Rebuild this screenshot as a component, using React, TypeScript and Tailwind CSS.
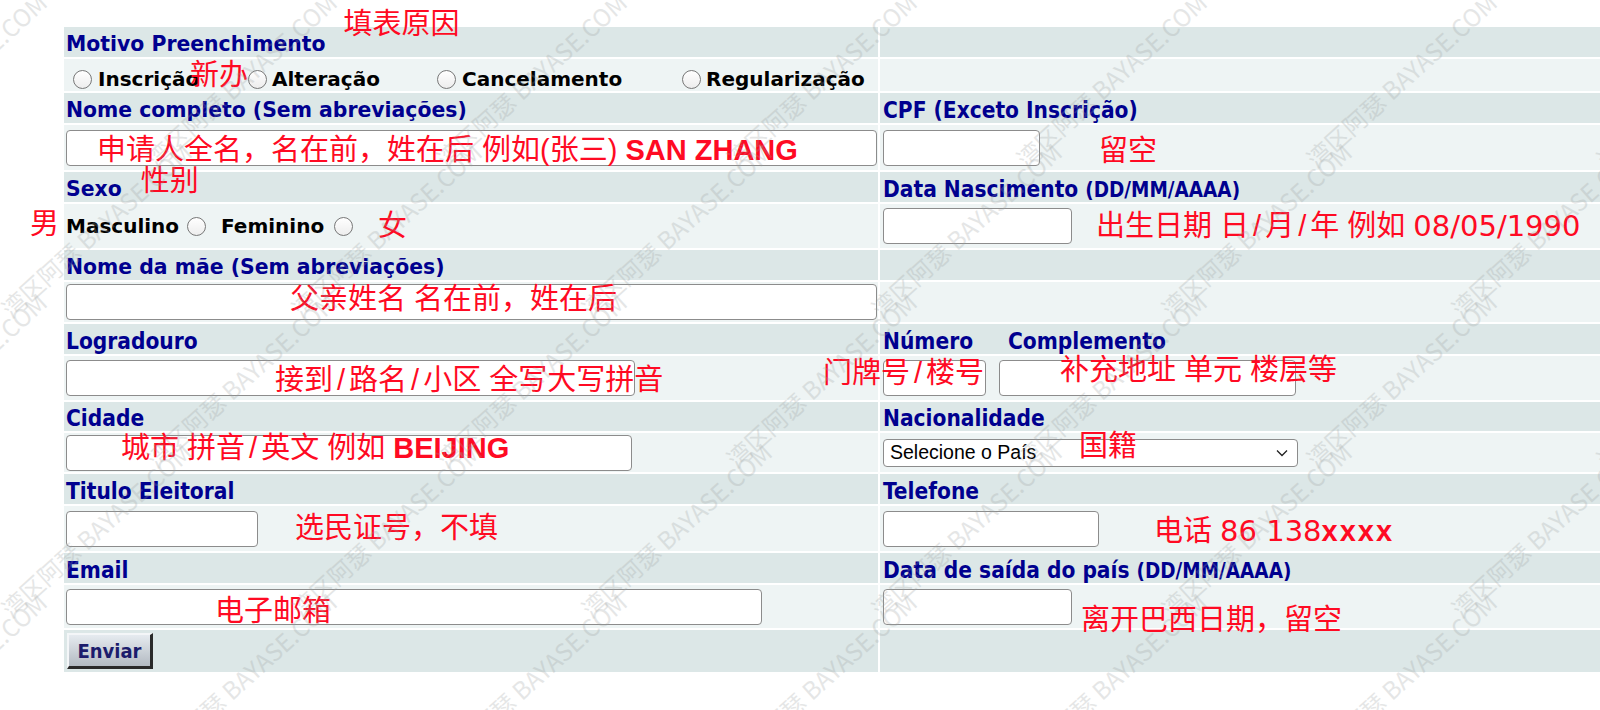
import React from 'react';

const wide = "pt-[4px] font-['DejaVu_Sans',sans-serif] font-bold text-[20.4px] leading-none text-[#00008f] whitespace-nowrap";
const narrow = "pt-[4px] font-['DejaVu_Sans_Condensed','DejaVu_Sans',sans-serif] font-bold text-[22.5px] leading-none text-[#00008f] whitespace-nowrap";
const black = "font-['DejaVu_Sans',sans-serif] font-bold text-[20px] leading-none text-black whitespace-nowrap";
const red = "shrink-0 whitespace-nowrap font-['Liberation_Sans','Noto_Sans_CJK_SC',sans-serif] text-[29px] leading-none text-[#ff0a23]";
const note = `absolute ${red}`;

// the slash and the digits of the notes are wider than Arial's
function Slash() {
  return <span className="mx-[4px]">/</span>;
}

function Num({ children }: { children: React.ReactNode }) {
  return <span className="font-['DejaVu_Sans',sans-serif]">{children}</span>;
}

function Field({ className }: { className: string }) {
  return (
    <input
      type="text"
      readOnly
      className={`h-[36px] shrink-0 rounded-[4px] border border-[#8c8c8c] bg-white outline-none ${className}`}
    />
  );
}

function Radio() {
  return <span className="inline-block h-[19px] w-[19px] shrink-0 rounded-full border border-[#777777] bg-linear-to-b from-white to-[#ededed]" />;
}

interface RowProps {
  h: string;
  dark?: boolean;
  left?: React.ReactNode;
  right?: React.ReactNode;
}

function Row({ h, dark, left, right }: RowProps) {
  const bg = dark ? 'bg-[#dce7e7]' : 'bg-[#eef4f4]';
  return (
    <div className={`grid grid-cols-[814px_1fr] grid-rows-1 gap-[2px] ${h}`}>
      <div className={`flex min-h-0 items-center pl-[2px] ${bg}`}>{left}</div>
      <div className={`flex min-h-0 items-center pl-[3px] ${bg}`}>{right}</div>
    </div>
  );
}

// faint diagonal watermark tiled over the page
function Watermark() {
  const marks: { x: number; y: number }[] = [];
  for (let r = 0; r < 6; r++) {
    for (let c = 0; c < 7; c++) {
      marks.push({ x: c * 290 + (r % 2) * 145 - 140, y: r * 150 - 30 });
    }
  }
  return (
    <div className="pointer-events-none absolute inset-0">
      {marks.map((m, i) => (
        <span
          key={i}
          className="absolute origin-left -rotate-[42deg] whitespace-nowrap font-['Noto_Sans_CJK_SC',sans-serif] text-[24px] leading-none text-[#9aa0a0] opacity-25"
          style={{ left: m.x, top: m.y + 180 }}
        >
          湾区阿瑟 BAYASE.COM
        </span>
      ))}
    </div>
  );
}

export default function App() {
  return (
    <div className="relative h-[710px] w-[1600px] overflow-hidden bg-white">
      <div className="flex flex-col gap-[2px] pl-[64px] pt-[27px]">
        <Row
          h="h-[30px]"
          dark
          left={
            <>
              <span className={wide}>Motivo Preenchimento</span>
              <span className={`${red} ml-[18px] mt-[-17px] self-start`}>填表原因</span>
            </>
          }
        />
        <Row
          h="h-[32px]"
          left={
            <div className="flex items-center pl-[7px] pt-[8px]">
              <div className="flex w-[175px] items-center gap-[6px]">
                <Radio />
                <span className={black}>Inscrição</span>
              </div>
              <div className="flex w-[189px] items-center gap-[5px]">
                <Radio />
                <span className={black}>Alteração</span>
              </div>
              <div className="flex w-[245px] items-center gap-[6px]">
                <Radio />
                <span className={black}>Cancelamento</span>
              </div>
              <div className="flex items-center gap-[5px]">
                <Radio />
                <span className={black}>Regularização</span>
              </div>
            </div>
          }
        />
        <Row
          h="h-[30px]"
          dark
          left={<span className={wide}>Nome completo (Sem abreviações)</span>}
          right={<span className={narrow}>CPF (Exceto Inscrição)</span>}
        />
        <Row
          h="h-[45px]"
          left={<Field className="w-[811px]" />}
          right={
            <>
              <Field className="w-[157px]" />
              <span className={`${red} ml-[59px] mt-[12px] self-start`}>留空</span>
            </>
          }
        />
        <Row
          h="h-[30px]"
          dark
          left={
            <>
              <span className={wide}>Sexo</span>
              <span className={`${red} ml-[19px] mt-[-5px] self-start`}>性别</span>
            </>
          }
          right={
            <span className={narrow}>
              Data Nascimento <span className="text-[20.5px]">(DD/MM/AAAA)</span>
            </span>
          }
        />
        <Row
          h="h-[44px]"
          left={
            <div className="flex items-center">
              <span className={`${black} w-[121px]`}>Masculino</span>
              <Radio />
              <span className={`${black} ml-[15px] w-[113px]`}>Feminino</span>
              <Radio />
              <span className={`${red} ml-[25px]`}>女</span>
            </div>
          }
          right={
            <>
              <Field className="w-[189px]" />
              <span className={`${red} ml-[24px]`}>
                出生日期 日<Slash />月<Slash />年 例如 <Num>08/05/1990</Num>
              </span>
            </>
          }
        />
        <Row h="h-[30px]" dark left={<span className={wide}>Nome da mãe (Sem abreviações)</span>} />
        <Row h="h-[40px]" left={<Field className="w-[811px]" />} />
        <Row
          h="h-[30px]"
          dark
          left={<span className={narrow}>Logradouro</span>}
          right={
            <div className="flex items-center">
              <span className={`${narrow} w-[125px]`}>Número</span>
              <span className={narrow}>Complemento</span>
            </div>
          }
        />
        <Row
          h="h-[44px]"
          left={<Field className="w-[569px]" />}
          right={
            <div className="flex items-center gap-[13px]">
              <Field className="w-[103px]" />
              <Field className="w-[297px]" />
            </div>
          }
        />
        <Row
          h="h-[29px]"
          dark
          left={<span className={narrow}>Cidade</span>}
          right={<span className={narrow}>Nacionalidade</span>}
        />
        <Row
          h="h-[39px]"
          left={<Field className="w-[566px]" />}
          right={
            <div className="flex h-[28px] w-[415px] items-center justify-between rounded-[4px] border border-[#8c8c8c] bg-white pl-[6px] pr-[9px] font-['Liberation_Sans',sans-serif] text-[19.5px] leading-none text-black">
              <span>Selecione o País</span>
              <svg width="12" height="8" viewBox="0 0 12 8">
                <path d="M1 1.5 L6 6.5 L11 1.5" fill="none" stroke="#222222" strokeWidth="1.3" />
              </svg>
            </div>
          }
        />
        <Row
          h="h-[30px]"
          dark
          left={<span className={narrow}>Titulo Eleitoral</span>}
          right={<span className={narrow}>Telefone</span>}
        />
        <Row
          h="h-[45px]"
          left={
            <>
              <Field className="w-[192px]" />
              <span className={`${red} ml-[37px]`}>选民证号，不填</span>
            </>
          }
          right={
            <>
              <Field className="w-[216px]" />
              <span className={`${red} ml-[55px] mt-[11px] self-start`}>
                电话 <Num>86 138</Num>
                <span className="font-bold tracking-[2px]">xxxx</span>
              </span>
            </>
          }
        />
        <Row
          h="h-[30px]"
          dark
          left={<span className={narrow}>Email</span>}
          right={
            <span className={narrow}>
              Data de saída do país <span className="text-[20.5px]">(DD/MM/AAAA)</span>
            </span>
          }
        />
        <Row
          h="h-[43px]"
          left={<Field className="w-[696px]" />}
          right={
            <>
              <Field className="w-[189px]" />
              <span className={`${red} relative z-10 mb-[-21px] ml-[9px] mt-[21px] self-start`}>离开巴西日期，留空</span>
            </>
          }
        />
        <Row
          h="h-[42px]"
          dark
          left={
            <button className="ml-[1px] h-[36px] w-[86px] border-t-2 border-l-2 border-r-[3px] border-b-[3px] border-t-[#f4f6f8] border-l-[#f4f6f8] border-r-[#2a2a2a] border-b-[#2a2a2a] bg-linear-to-b from-[#e6ebf0] to-[#b3bac2] font-['DejaVu_Sans_Condensed',sans-serif] text-[20px] font-bold leading-none text-[#1c1c6c]">
              Enviar
            </button>
          }
        />
      </div>

      {/* red annotations written over the inputs and text */}
      <span className={`${note} left-[190px] top-[61px]`}>新办</span>
      <span className={`${note} left-[97px] top-[136px]`}>
        申请人全名，名在前，姓在后 例如(张三) <span className="font-bold">SAN ZHANG</span>
      </span>
      <span className={`${note} left-[30px] top-[210px]`}>男</span>
      <span className={`${note} left-[290px] top-[285px]`}>父亲姓名 名在前，姓在后</span>
      <span className={`${note} left-[275px] top-[366px]`}>
        接到<Slash />路名<Slash />小区 全写大写拼音
      </span>
      <span className={`${note} left-[823px] top-[359px]`}>
        门牌号<Slash />楼号
      </span>
      <span className={`${note} left-[1060px] top-[356px]`}>补充地址 单元 楼层等</span>
      <span className={`${note} left-[121px] top-[434px]`}>
        城市 拼音<Slash />英文 例如 <span className="font-bold">BEIJING</span>
      </span>
      <span className={`${note} left-[1079px] top-[432px]`}>国籍</span>
      <span className={`${note} left-[215px] top-[597px]`}>电子邮箱</span>

      <Watermark />
    </div>
  );
}
